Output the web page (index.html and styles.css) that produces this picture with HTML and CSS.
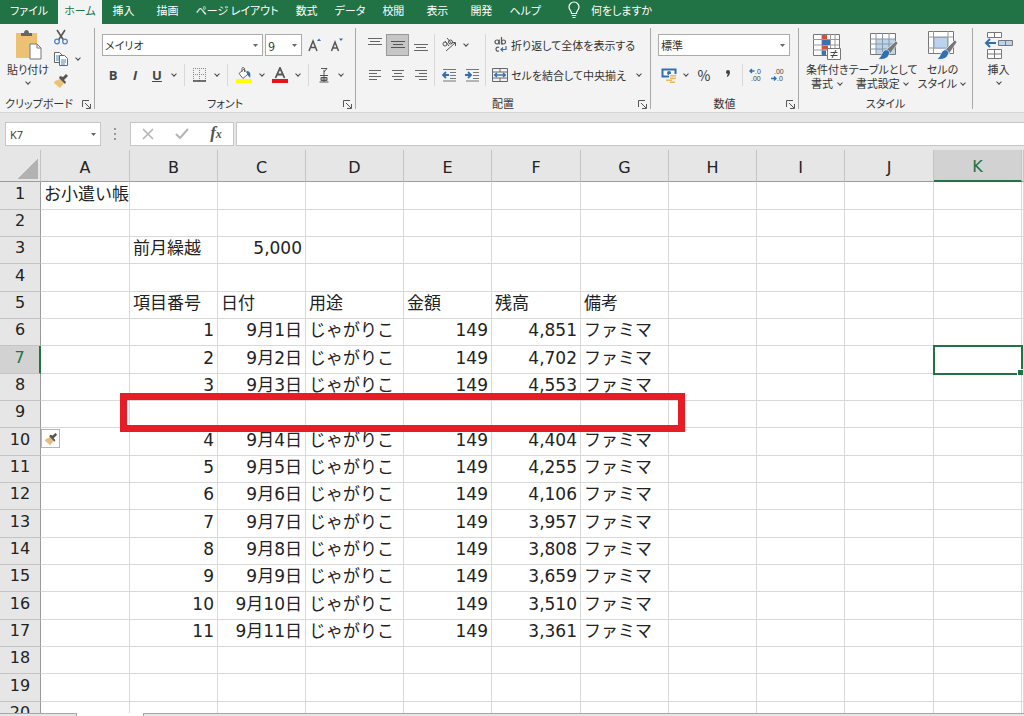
FILE: index.html
```html
<!DOCTYPE html>
<html lang="ja">
<head>
    <meta charset="UTF-8">
    <meta name="viewport" content="width=device-width, initial-scale=1.0">
    <title>お小遣い帳</title>
    <link rel="stylesheet" href="styles.css">
</head>
<body>
    <nav class="tabs">
        <a href="#" class="tab file">ファイル</a>
        <a href="#" class="tab kana active">ホーム</a>
        <a href="#" class="tab">挿入</a>
        <a href="#" class="tab">描画</a>
        <a href="#" class="tab kana">ページ レイアウト</a>
        <a href="#" class="tab">数式</a>
        <a href="#" class="tab kana">データ</a>
        <a href="#" class="tab">校閲</a>
        <a href="#" class="tab">表示</a>
        <a href="#" class="tab">開発</a>
        <a href="#" class="tab kana">ヘルプ</a>
        <a href="#" class="tab tell">
            <svg width="14" height="18" viewBox="0 0 14 18" fill="none" stroke="#fff" stroke-width="1.2"><path d="M4.500 12.500C4.500 9.500 2 9 2 6a5 5 0 0 1 10 0c0 3-2.500 3.500-2.500 6.500zM4.800 14.500h4.400M5.500 16.500h3"/></svg>
            何をしますか
        </a>
    </nav>

    <div class="ribbon">
        <section class="group clipboard">
            <div class="tools">
                <button class="big">
                    <svg width="30" height="30" viewBox="0 0 30 30"><path d="M3 3h21v25H3z" fill="#edc174"/><path d="M8 6V3h3c0-4 5-4 5 0h3v3z" fill="#666"/><path d="M17 14h7l4 4v11H17z" fill="#fff" stroke="#777"/><path d="M24 14v4h4" fill="none" stroke="#777"/></svg>
                    <span>貼り付け</span>
                    <i class="chev"></i>
                </button>
                <div class="stack">
                    <button class="icon" aria-label="切り取り">
                        <svg width="16" height="16" viewBox="0 0 16 16" fill="none"><path d="M4 1l6.500 10M12 1L5.500 11" stroke="#555" stroke-width="1.600"/><circle cx="4" cy="12.500" r="2.300" stroke="#4a86c5" stroke-width="1.300"/><circle cx="12" cy="12.500" r="2.300" stroke="#4a86c5" stroke-width="1.300"/></svg>
                    </button>
                    <div class="row">
                        <button class="icon" aria-label="コピー">
                            <svg width="16" height="16" viewBox="0 0 16 16" fill="#fff" stroke="#666"><path d="M1.500 1.500h5l3 3v7h-8z"/><path d="M3 5h3M3 7h3M3 9h3" stroke="#4a86c5"/><path d="M6.500 4.500h5l3 3v7h-8z"/><path d="M8 9h5M8 11h5M8 13h4" stroke="#4a86c5"/></svg>
                        </button>
                        <button class="drop" aria-label="コピーのメニュー"><i class="chev"></i></button>
                    </div>
                    <button class="icon" aria-label="書式のコピー">
                        <svg width="16" height="16" viewBox="0 0 16 16"><path d="M2 8l5-2 4 4-4 5-6-5z" fill="#edc174"/><path d="M6 5l6 6 1-2-2-2 4-4-2-2-3 3-3-1z" fill="#555"/></svg>
                    </button>
                </div>
            </div>
            <div class="caption">クリップボード<button class="launcher" aria-label="クリップボードの詳細"><svg width="9" height="9" viewBox="0 0 9 9" fill="none" stroke="#555"><path d="M.5 7V.5H7M3 3l5 5M8.500 4v4.500H4"/></svg></button></div>
        </section>

        <section class="group font">
            <div class="rows">
                <div class="row boxes">
                    <select class="font-name" aria-label="フォント"><option>メイリオ</option></select>
                    <select class="font-size" aria-label="フォント サイズ"><option>9</option></select>
                    <button class="icon grow" aria-label="フォント サイズの拡大"><svg width="16" height="16" viewBox="0 0 16 16" fill="none"><path d="M2 14L6 4l4 10M3.500 10.500h5" stroke="#555" stroke-width="1.500"/><path d="M10 4l2-2.500L14 4z" fill="#2f6fb5"/></svg></button>
                    <button class="icon" aria-label="フォント サイズの縮小"><svg width="16" height="16" viewBox="0 0 16 16" fill="none"><path d="M2.500 14L6 5l3.500 9M4 11h4" stroke="#555" stroke-width="1.500"/><path d="M10 1.500h4L12 4z" fill="#2f6fb5"/></svg></button>
                </div>
                <div class="row">
                    <button class="icon letter">B</button>
                    <button class="icon letter italic">I</button>
                    <button class="icon letter under">U</button>
                    <button class="drop" aria-label="下線のメニュー"><i class="chev"></i></button>
                    <span class="sep"></span>
                    <button class="icon" aria-label="罫線"><svg width="14" height="14" viewBox="0 0 14 14" fill="none" stroke="#888"><path d="M.5 0v13M6.500 0v13M12.500 0v13M0 .5h13M0 6.500h13" stroke-dasharray="1 1"/><path d="M0 13h13" stroke="#444" stroke-width="1.500"/></svg></button>
                    <button class="drop" aria-label="罫線のメニュー"><i class="chev"></i></button>
                    <span class="sep"></span>
                    <button class="icon wide" aria-label="塗りつぶしの色"><svg width="16" height="16" viewBox="0 0 16 16"><path d="M3 6.500l5-4.500 4 5-5 4.500z" fill="#fff" stroke="#666"/><path d="M6 5V1.500C6 0 8.500 0 8.500 2v3" fill="none" stroke="#666"/><path d="M11 4c3 0 4 3 3 7-1-2-2-2-3-4z" fill="#2f6fb5"/><path d="M0 12h16v4H0z" fill="#ff0"/></svg></button>
                    <button class="drop" aria-label="塗りつぶしのメニュー"><i class="chev"></i></button>
                    <button class="icon wide" aria-label="フォントの色"><svg width="16" height="16" viewBox="0 0 16 16"><path d="M3.500 11L8 1l4.500 10M5 7.500h6" fill="none" stroke="#555" stroke-width="1.800"/><path d="M0 12h16v4H0z" fill="#e8131a"/></svg></button>
                    <button class="drop" aria-label="フォントの色のメニュー"><i class="chev"></i></button>
                    <span class="sep"></span>
                    <button class="icon" aria-label="ふりがな"><svg width="12" height="16" viewBox="0 0 12 16" fill="none" stroke="#555"><path d="M3 1.500h6L6 5M6 3v4M2 8.500h8M3 10.500h6v3H3zM3 12h6M1.500 15h9M6 7v8"/></svg></button>
                    <button class="drop" aria-label="ふりがなのメニュー"><i class="chev"></i></button>
                </div>
            </div>
            <div class="caption">フォント<button class="launcher" aria-label="フォントの詳細"><svg width="9" height="9" viewBox="0 0 9 9" fill="none" stroke="#555"><path d="M.5 7V.5H7M3 3l5 5M8.500 4v4.500H4"/></svg></button></div>
        </section>

        <section class="group align">
            <div class="tools">
                <div class="rows">
                    <div class="row">
                        <button class="icon mid" aria-label="上揃え"><svg width="14" height="16" viewBox="0 0 14 16" stroke="#666"><path d="M0 1.500h14M2 4.500h10M0 7.500h14"/></svg></button>
                        <button class="icon mid pressed" aria-label="上下中央揃え"><svg width="14" height="16" viewBox="0 0 14 16" stroke="#555"><path d="M0 4.500h14M2 7.500h10M0 10.500h14"/></svg></button>
                        <button class="icon mid" aria-label="下揃え"><svg width="14" height="16" viewBox="0 0 14 16" stroke="#666"><path d="M0 7.500h14M2 10.500h10M0 13.500h14"/></svg></button>
                    </div>
                    <div class="row">
                        <button class="icon mid" aria-label="左揃え"><svg width="12" height="12" viewBox="0 0 12 12" stroke="#666"><path d="M0 1.500h12M0 4.500h8M0 7.500h12M0 10.500h8"/></svg></button>
                        <button class="icon mid" aria-label="中央揃え"><svg width="12" height="12" viewBox="0 0 12 12" stroke="#666"><path d="M0 1.500h12M2 4.500h8M0 7.500h12M2 10.500h8"/></svg></button>
                        <button class="icon mid" aria-label="右揃え"><svg width="12" height="12" viewBox="0 0 12 12" stroke="#666"><path d="M0 1.500h12M4 4.500h8M0 7.500h12M4 10.500h8"/></svg></button>
                    </div>
                </div>
                <span class="sep tall"></span>
                <div class="rows">
                    <div class="row">
                        <button class="icon mid" aria-label="方向"><svg width="16" height="16" viewBox="0 0 16 16" fill="none" stroke="#555"><circle cx="4" cy="7" r="2"/><path d="M4 4l4 5M6 1l5 6"/><circle cx="9.500" cy="5" r="2"/><path d="M5 14l9-8M11 5.500l3.500 0v3.500"/></svg></button>
                        <button class="drop" aria-label="方向のメニュー"><i class="chev"></i></button>
                    </div>
                    <div class="row">
                        <button class="icon mid" aria-label="インデントを減らす"><svg width="14" height="14" viewBox="0 0 14 14" fill="none"><path d="M1 1.500h13M8 4.500h6M8 7.500h6M8 10.500h6M1 13h13" stroke="#777"/><path d="M7 7H1M4 4L1 7l3 3" stroke="#2f6fb5" stroke-width="1.800"/></svg></button>
                        <button class="icon mid" aria-label="インデントを増やす"><svg width="14" height="14" viewBox="0 0 14 14" fill="none"><path d="M1 1.500h13M8 4.500h6M8 7.500h6M8 10.500h6M1 13h13" stroke="#777"/><path d="M0 7h6M3 4l3 3-3 3" stroke="#2f6fb5" stroke-width="1.800"/></svg></button>
                    </div>
                </div>
                <span class="sep tall"></span>
                <div class="rows">
                    <button class="text-btn">
                        <svg width="16" height="16" viewBox="0 0 16 16" fill="none" stroke="#555" stroke-width="1.200"><circle cx="5" cy="5" r="2"/><path d="M7.200 2.500v5M9.500 0v7.500"/><circle cx="11.500" cy="5" r="2"/><path d="M7 10.500c-4-2-4 5 0 3.500"/><path d="M14 9v3.500H9M11 10.500l-2 2 2 2" stroke="#2f6fb5"/></svg>
                        <span>折り返して全体を表示する</span>
                    </button>
                    <button class="text-btn">
                        <svg width="16" height="16" viewBox="0 0 16 16" fill="none" stroke="#666"><path d="M.5 1.500h15v13H.5zM1 5h14M1 11h14M8 1.500V5M8 11v3.500"/><path d="M2.500 8h11M5 6L2.500 8 5 10M11 6l2.500 2L11 10" stroke="#2f6fb5" stroke-width="1.300"/></svg>
                        <span>セルを結合して中央揃え</span>
                        <i class="chev"></i>
                    </button>
                </div>
            </div>
            <div class="caption">配置<button class="launcher" aria-label="配置の詳細"><svg width="9" height="9" viewBox="0 0 9 9" fill="none" stroke="#555"><path d="M.5 7V.5H7M3 3l5 5M8.500 4v4.500H4"/></svg></button></div>
        </section>

        <section class="group number">
            <div class="rows">
                <select class="format" aria-label="数値の書式"><option>標準</option></select>
                <div class="row">
                    <button class="icon" aria-label="通貨表示形式"><svg width="16" height="16" viewBox="0 0 16 16" fill="none"><path d="M1.500 2.500h13v7h-13z" fill="#fff" stroke="#2f6fb5" stroke-width="2"/><circle cx="8" cy="6" r="2" fill="#2f6fb5"/><path d="M8 7h8v9H5v-4h3z" fill="#f3f3f3"/><path d="M9 8h6v1.500H9zM9 10.500h6V12H9zM5 12.500h6V14H5zM9 14.500h5V16H9z" fill="#edb860"/></svg></button>
                    <button class="drop" aria-label="通貨のメニュー"><i class="chev"></i></button>
                    <button class="icon wide percent">%</button>
                    <button class="icon wide" aria-label="桁区切りスタイル"><svg width="6" height="10" viewBox="0 0 6 10"><path d="M1 2a2 2 0 0 1 4 0c0 2.500-1 4-3 5V5.500l1-1.500C1.500 4 1 3 1 2z" fill="#444"/></svg></button>
                    <span class="sep near"></span>
                    <button class="icon decimals" aria-label="小数点以下の表示桁数を増やす"><svg width="14" height="14" viewBox="0 0 14 14"><path d="M5.500 3H1M3 1L1 3l2 2" fill="none" stroke="#2f6fb5" stroke-width="1.400"/><text x="6" y="6">.0</text><text x="2" y="13">.00</text></svg></button>
                    <button class="icon decimals" aria-label="小数点以下の表示桁数を減らす"><svg width="14" height="14" viewBox="0 0 14 14"><path d="M0 10.500h5M3 8.500l2 2-2 2" fill="none" stroke="#2f6fb5" stroke-width="1.400"/><text x="3" y="6">.00</text><text x="6" y="13">.0</text></svg></button>
                </div>
            </div>
            <div class="caption">数値<button class="launcher" aria-label="数値の詳細"><svg width="9" height="9" viewBox="0 0 9 9" fill="none" stroke="#555"><path d="M.5 7V.5H7M3 3l5 5M8.500 4v4.500H4"/></svg></button></div>
        </section>

        <section class="group styles">
            <div class="tools">
                <button class="big">
                    <svg width="30" height="30" viewBox="0 0 30 30"><path d="M1.500 4.500h26v21h-26z" fill="#fff" stroke="#777"/><path d="M1 9.500h26M1 15h26M1 20h26M10 4v21M18.500 4v21M23 4v21" stroke="#999"/><path d="M10 5h5v4h-5zM10 15.500h6v4h-6z" fill="#d6503c"/><path d="M10 10h8v5h-8zM10 20.500h4v5h-4z" fill="#3b73af"/><path d="M15.500 18.500h13v11h-13z" fill="#fff" stroke="#777"/><path d="M18.500 22.500h7M18.500 25.500h7M24 20l-4 8" stroke="#444"/></svg>
                    <span>条件付き<br>書式 <i class="chev"></i></span>
                </button>
                <button class="big">
                    <svg width="30" height="30" viewBox="0 0 30 30"><path d="M2.500 3.500h25v21h-25z" fill="#fff" stroke="#777"/><path d="M8 9h19v15H8z" fill="#bcd3ec"/><path d="M2 9h25M2 14h25M2 19h25M8 3v21M14.500 3v21M21 3v21" stroke="#8a97a5"/><path d="M28 11l2 2-8 11-4-4z" fill="#777" stroke="#fff" stroke-width=".6"/><path d="M17 20c3-1 6 2 4 5-2 4-6 5-11 4 4-2 3-7 7-9z" fill="#2f6fb5" stroke="#fff" stroke-width=".6"/></svg>
                    <span>テーブルとして<br>書式設定 <i class="chev"></i></span>
                </button>
                <button class="big">
                    <svg width="30" height="30" viewBox="0 0 30 30"><path d="M1.500 1.500h25v22h-25z" fill="#fff" stroke="#777"/><path d="M1 7h25M1 18h25M6.500 1v22M21 1v22" stroke="#999"/><path d="M7 7.500h13.500V18H7z" fill="#bcd3ec" stroke="#8aa4c4"/><path d="M28 10l2 2-8 12-4-4z" fill="#777" stroke="#fff" stroke-width=".6"/><path d="M17 20c3-1 6 2 4 5-2 4-6 5-11 4 4-2 3-7 7-9z" fill="#2f6fb5" stroke="#fff" stroke-width=".6"/></svg>
                    <span>セルの<br>スタイル <i class="chev"></i></span>
                </button>
            </div>
            <div class="caption">スタイル</div>
        </section>

        <section class="group cells">
            <div class="tools">
                <button class="big">
                    <svg width="30" height="30" viewBox="0 0 30 30" fill="#fff" stroke="#777"><path d="M3.500 2.500h14v5h-14zM10.500 2.500v5M3.500 19.500h14v9h-14zM10.500 19.500v9M3.500 24h14"/><path d="M14.500 10.500h14v5h-14zM21.500 10.500v5" fill="#bcd3ec"/><path d="M12 13H2M6 9l-4 4 4 4" fill="none" stroke="#2f6fb5" stroke-width="2"/></svg>
                    <span>挿入</span>
                    <i class="chev"></i>
                </button>
            </div>
        </section>
    </div>

    <div class="formula-bar">
        <select class="name-box" aria-label="名前ボックス"><option>K7</option></select>
        <svg class="dots" width="3" height="12" viewBox="0 0 3 12" fill="#999"><path d="M0 0h2v2H0zM0 5h2v2H0zM0 10h2v2H0z"/></svg>
        <div class="entry">
            <button aria-label="キャンセル"><svg width="12" height="12" viewBox="0 0 12 12" stroke="#b5b5b5" stroke-width="1.600"><path d="M1 1l10 10M11 1L1 11"/></svg></button>
            <button aria-label="入力"><svg width="14" height="12" viewBox="0 0 14 12" fill="none" stroke="#b5b5b5" stroke-width="2"><path d="M1 6l4 4 8-9"/></svg></button>
            <button class="fx">f<small>x</small></button>
        </div>
        <input class="formula" type="text" aria-label="数式バー">
    </div>

    <main class="grid">
        <table class="sheet">
            <colgroup>
                <col class="w-head"><col class="w-wide"><col class="w-cell"><col class="w-cell"><col class="w-text">
                <col class="w-cell"><col class="w-wide"><col class="w-cell"><col class="w-cell"><col class="w-cell">
                <col class="w-wide"><col class="w-cell"><col>
            </colgroup>
            <thead><tr id="letters"></tr></thead>
            <tbody id="rows"></tbody>
        </table>
        <div class="marker"></div>
        <button class="paste-options" aria-label="挿入オプション"><svg width="14" height="14" viewBox="0 0 16 16"><path d="M2 8l5-2 4 4-4 5-6-5z" fill="#e3bf7e"/><path d="M6 5l6 6 1-2-2-2 4-4-2-2-3 3-3-1z" fill="#555"/></svg></button>
    </main>

    <footer class="sheet-tabs"><span class="sheet-tab"></span><span class="sheet-tab current"></span></footer>

    <script>
        var letters = ["A", "B", "C", "D", "E", "F", "G", "H", "I", "J", "K", ""];
        var numeric = ["B", "C", "E", "F"];
        var cells = {
            A1: "お小遣い帳",
            B3: "前月繰越", C3: "5,000",
            B5: "項目番号", C5: "日付", D5: "用途", E5: "金額", F5: "残高", G5: "備考"
        };

        // row 9 is left blank between items 3 and 4
        var balance = 5000;
        for (var n = 1; n <= 11; n++) {
            var r = n <= 3 ? n + 5 : n + 6;
            balance -= 149;
            cells["B" + r] = n;
            cells["C" + r] = "9月" + n + "日";
            cells["D" + r] = "じゃがりこ";
            cells["E" + r] = 149;
            cells["F" + r] = balance.toLocaleString("en-US");
            cells["G" + r] = "ファミマ";
        }

        var head = '<th class="corner"></th>';
        letters.forEach(function (c) {
            head += '<th class="' + (c == "K" ? "current" : "") + '">' + c + '</th>';
        });
        document.getElementById("letters").innerHTML = head;

        var body = "";
        for (var row = 1; row <= 20; row++) {
            body += '<tr><th class="' + (row == 7 ? "current" : "") + '">' + row + '</th>';
            letters.forEach(function (c) {
                var cls = "";
                if (numeric.includes(c) && (row > 5 || c + row == "C3")) cls = "num";
                if (c + row == "K7") cls = "selected";
                body += '<td class="' + cls + '">' + (cells[c + row] || "") + '</td>';
            });
            body += '</tr>';
        }
        document.getElementById("rows").innerHTML = body;
    </script>
</body>
</html>
```
FILE: styles.css
```css
* {
    box-sizing: border-box;
}
body {
    display: flex;
    flex-direction: column;
    height: 100vh;
    margin: 0;
    overflow: hidden;
    background: #e6e6e6;
    color: #333;
    font-family: "Noto Sans CJK JP", sans-serif;
    font-size: 11px;
    font-feature-settings: "palt";
}
button, select, input {
    margin: 0;
    padding: 0;
    border: 0;
    background: none;
    color: inherit;
    font: inherit;
    font-feature-settings: inherit;
}
svg {
    display: block;
    flex: none;
}

/* tabs */
.tabs {
    display: flex;
    flex: none;
    height: 24px;
    background: #217346;
}
.tab {
    display: flex;
    align-items: center;
    padding: 0 11px 4px;
    color: #fff;
    white-space: nowrap;
    text-decoration: none;
}
.tab.file {
    padding-right: 10px;
    padding-left: 10px;
}
.tab.kana {
    padding-right: 6px;
    padding-left: 6px;
}
.tab.active {
    background: #f3f3f3;
    color: #217346;
}
.tab.tell {
    gap: 10px;
    padding-left: 20px;
}

/* ribbon */
.ribbon {
    display: flex;
    flex: none;
    height: 89px;
    padding-top: 4px;
    background: #f3f3f3;
    border-bottom: 1px solid #d5d5d5;
}
.group {
    display: flex;
    flex: none;
    flex-direction: column;
    justify-content: space-between;
    height: 81px;
    padding: 6px 7px 0;
    border-right: 1px solid #a8a8a8;
}
.clipboard { width: 95px; }
.font { width: 261px; }
.align { width: 295px; }
.number { width: 148px; }
.styles { width: 174px; }
.cells {
    flex: 1;
    border-right: 0;
}
.tools {
    display: flex;
}
.rows {
    display: flex;
    flex-direction: column;
    gap: 8px;
}
.row {
    display: flex;
    align-items: center;
    height: 22px;
}
.caption {
    display: flex;
    position: relative;
    justify-content: center;
    height: 12px;
    line-height: 12px;
    white-space: nowrap;
}
.clipboard .caption {
    padding-right: 16px;
}
.launcher {
    position: absolute;
    right: -4px;
    bottom: 0;
}
.icon {
    display: flex;
    align-items: center;
    justify-content: center;
    width: 22px;
    height: 22px;
}
.icon.mid { width: 23px; }
.icon.wide { width: 24px; }
.icon.pressed {
    background: #c6c6c6;
    border: 1px solid #999;
}
.grow { margin-left: 2px; }
.drop {
    display: flex;
    align-items: center;
    justify-content: center;
    width: 12px;
    height: 22px;
}
.chev {
    display: inline-block;
    flex: none;
    width: 4px;
    height: 4px;
    border: solid #444;
    border-width: 0 1px 1px 0;
    transform: translateY(-1px) rotate(45deg);
}
.sep {
    width: 1px;
    height: 22px;
    margin: 0 4px;
    background: #d8d8d8;
}
.sep.near { margin: 0 2px; }
.sep.tall {
    height: 52px;
    margin: 0 2px;
}
.letter {
    color: #444;
    font-family: "Open Sans", sans-serif;
    font-size: 13px;
    font-weight: bold;
}
.italic { font-style: italic; }
.under { text-decoration: underline; }
.percent { font-size: 14px; }
.decimals text {
    fill: #444;
    font-family: "Liberation Sans", sans-serif;
    font-size: 7px;
}
.text-btn {
    display: flex;
    align-items: center;
    gap: 3px;
    height: 22px;
    padding-left: 4px;
    white-space: nowrap;
}
.text-btn .chev { margin-left: 8px; }

.big {
    display: flex;
    flex-direction: column;
    align-items: center;
    height: 60px;
    margin-top: -4px;
    line-height: 14px;
    white-space: nowrap;
}
.big > span { margin-top: 2px; }
.big > .chev { margin-top: 5px; }
.big span .chev {
    margin: 0 2px 2px;
}
.clipboard .big { width: 42px; }
.stack {
    display: flex;
    flex-direction: column;
    margin-top: -8px;
    margin-left: 1px;
}
.styles .tools {
    justify-content: space-between;
}
.cells .tools {
    justify-content: center;
}

select {
    appearance: none;
    height: 22px;
    padding: 0 4px;
    border: 1px solid #ababab;
    background: #fff url("data:image/svg+xml,%3Csvg xmlns='http://www.w3.org/2000/svg' width='5' height='3'%3E%3Cpath d='M0 0h5L2.5 3z' fill='%23666'/%3E%3C/svg%3E") no-repeat right 4px center;
}
.font-name {
    width: 162px;
    padding-left: 2px;
}
.font-size {
    width: 37px;
    margin-left: 2px;
    padding-left: 2px;
    font-size: 12px;
}
.format {
    width: 132px;
    padding-left: 2px;
}

/* formula bar */
.formula-bar {
    display: flex;
    align-items: center;
    flex: none;
    height: 37px;
    padding: 5px 0 0 5px;
}
.name-box {
    width: 96px;
    height: 24px;
    border-color: #c6c6c6;
    font-family: "Open Sans", sans-serif;
}
.dots { margin: 0 13px; }
.entry {
    display: flex;
    width: 104px;
    height: 24px;
    background: #fff;
    border: 1px solid #c6c6c6;
}
.entry button {
    display: flex;
    flex: 1;
    align-items: center;
    justify-content: center;
}
.entry .fx {
    align-items: baseline;
    font-family: "Liberation Serif", serif;
    font-size: 17px;
    font-style: italic;
    font-weight: bold;
    color: #555;
}
.fx small { font-size: 12px; }
.formula {
    flex: 1;
    height: 24px;
    margin-left: 2px;
    padding: 0 6px;
    background: #fff;
    border: 1px solid #c6c6c6;
    border-right: 0;
}

/* sheet */
.grid {
    position: relative;
    flex: 1;
    min-height: 0;
    overflow: hidden;
    background: #fff;
}
.sheet {
    width: 100%;
    table-layout: fixed;
    border-spacing: 0;
    color: #222;
    font-family: "DejaVu Sans", "Noto Sans CJK JP", sans-serif;
    font-size: 17px;
    font-feature-settings: normal;
    line-height: 20px;
}
.w-head { width: 41px; }
.w-cell { width: 88px; }
.w-wide { width: 89px; }
.w-text { width: 98px; }
.sheet th, .sheet td {
    height: 27px;
    padding: 0 3px 4px;
    border: solid #d9d9d9;
    border-width: 0 1px 1px 0;
    white-space: nowrap;
}
.sheet tbody tr:nth-child(3n+1) > * {
    height: 28px;
}
.sheet th {
    background: #e6e6e6;
    border-color: #c4c4c4;
    font-size: 16px;
    font-weight: normal;
}
.sheet thead th {
    height: 32px;
    padding-top: 4px;
    padding-bottom: 0;
    border-bottom-color: #9b9b9b;
}
.sheet tbody th {
    border-right-color: #9b9b9b;
}
.sheet .corner {
    background: linear-gradient(135deg, transparent 50%, #b2b2b2 50%) no-repeat 18px 9px / 20px 20px #e6e6e6;
}
.sheet th.current {
    background: #d2d2d2;
    color: #217346;
}
.sheet thead th.current {
    border-bottom: 2px solid #217346;
}
.sheet tbody th.current {
    border-right: 2px solid #217346;
}
.sheet td.num {
    text-align: right;
}
.sheet td.selected {
    position: relative;
    outline: 2px solid #217346;
    outline-offset: -1px;
}
.selected::after {
    content: "";
    position: absolute;
    right: -2px;
    bottom: -2px;
    width: 5px;
    height: 5px;
    background: #217346;
    border: solid #fff;
    border-width: 1px 0 0 1px;
}
/* frame round the blank row */
.marker {
    position: absolute;
    top: 243px;
    left: 120px;
    width: 565px;
    height: 39px;
    border: 7px solid #e81c24;
}
.paste-options {
    display: flex;
    position: absolute;
    top: 279px;
    left: 41px;
    align-items: center;
    justify-content: center;
    width: 19px;
    height: 19px;
    background: #fff;
    border: 1px solid #b5b5b5;
}

.sheet-tabs {
    display: flex;
    flex: none;
    height: 3px;
    border-top: 1px solid #a6a6a6;
}
.sheet-tab {
    width: 77px;
    border-right: 1px solid #a6a6a6;
}
.sheet-tab.current {
    width: 67px;
    margin-top: -1px;
    background: #fff;
}
```
